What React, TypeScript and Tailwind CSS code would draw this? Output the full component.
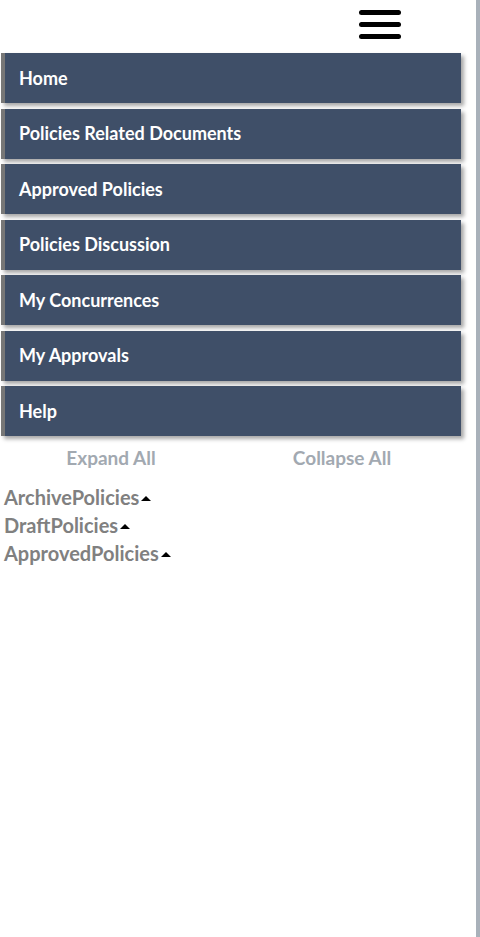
const menu = [
  "Home",
  "Policies Related Documents",
  "Approved Policies",
  "Policies Discussion",
  "My Concurrences",
  "My Approvals",
  "Help",
];

const folders = ["ArchivePolicies", "DraftPolicies", "ApprovedPolicies"];

function Caret() {
  return (
    <svg width="10" height="6" viewBox="0 0 10 6" className="ml-[2px] mt-[3px]">
      <path d="M0 6 L5 1 L10 6 Z" fill="#000" />
    </svg>
  );
}

export default function App() {
  return (
    <div className="flex min-h-[937px] w-[480px] bg-white font-['Lato',sans-serif]">
      <div className="flex-1">
        {/* header */}
        <div className="flex h-[53px] justify-end pr-[75px] pt-[9px]">
          <button className="flex h-[31px] w-[42px] flex-col justify-between py-[1px]">
            <span className="block h-[5px] w-full rounded-full bg-black" />
            <span className="block h-[5px] w-full rounded-full bg-black" />
            <span className="block h-[5px] w-full rounded-full bg-black" />
          </button>
        </div>

        {/* menu */}
        <nav className="flex flex-col gap-[5.5px] pl-[1px]">
          {menu.map((m) => (
            <a
              key={m}
              className="flex h-[50px] w-[460px] items-center border-l-[4px] border-[#777777] bg-[#3f4f68] pl-[14px] text-[18px] font-bold text-white shadow-[3px_3px_4px_rgba(0,0,0,0.35)]"
            >
              {m}
            </a>
          ))}
        </nav>

        <div className="mt-[8px] flex text-[19px] font-bold text-[#a2a9b1]">
          <span className="w-[222px] text-center">Expand All</span>
          <span className="w-[240px] text-center">Collapse All</span>
        </div>

        <ul className="mt-[10px] pl-[4px]">
          {folders.map((f) => (
            <li key={f} className="flex h-[28px] items-center text-[20px] font-bold text-[#808080]">
              {f}
              <Caret />
            </li>
          ))}
        </ul>
      </div>
      <div className="w-[4px] bg-[#a9b1ba]" />
    </div>
  );
}
